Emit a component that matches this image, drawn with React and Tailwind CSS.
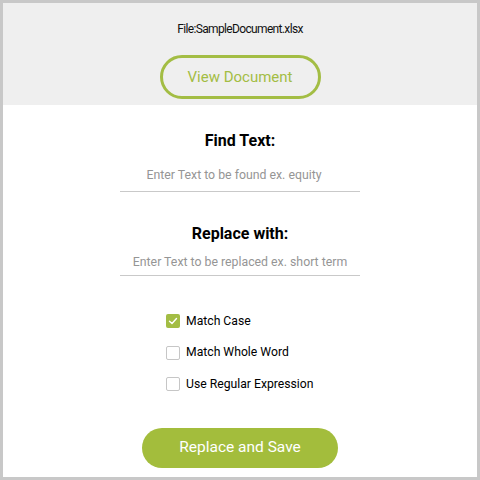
import React from "react";

function Check({ checked, label }) {
  return (
    <div className="flex items-center h-[20px]">
      {checked ? (
        <span className="w-[14px] h-[14px] rounded-[2px] bg-[#a3bd44] flex items-center justify-center">
          <svg width="10" height="10" viewBox="0 0 10 10" fill="none">
            <path d="M1.5 5.2 L4 7.5 L8.5 2.5" stroke="white" strokeWidth="1.4" strokeLinecap="round" strokeLinejoin="round" />
          </svg>
        </span>
      ) : (
        <span className="w-[14px] h-[14px] rounded-[2px] border border-[#c6c6c6] bg-white" />
      )}
      <span className="ml-[6px] text-[12.2px] text-black">{label}</span>
    </div>
  );
}

export default function App() {
  return (
    <div className="w-[480px] h-[480px] border-[3px] border-[#c8c8c8] bg-white flex flex-col" style={{ fontFamily: "Roboto, 'Liberation Sans', sans-serif" }}>
      <div className="h-[102px] bg-[#efefef] flex flex-col items-center shrink-0">
        <div className="mt-[17px] text-[12px] tracking-[-0.65px] text-[#111] leading-[18px]">File:SampleDocument.xlsx</div>
        <div className="mt-[17px] w-[161px] h-[44px] rounded-full border-[3px] border-[#a3bd44] flex items-center justify-center text-[15px] text-[#a3bd44]">
          View Document
        </div>
      </div>
      <div className="flex flex-col items-center">
        <div className="mt-[26px] text-[16px] font-bold text-black leading-[20px]">Find Text:</div>
        <div className="mt-[15px] w-[228px] h-[21px] pr-[12px] text-center text-[12.3px] text-[#959595] border-b border-[#c9c9c9] box-content pb-[4px]">
          Enter Text to be found ex. equity
        </div>
        <div className="mt-[32px] text-[16px] font-bold text-black leading-[20px]">Replace with:</div>
        <div className="mt-[9px] w-[240px] h-[21px] text-center text-[12.3px] text-[#959595] border-b border-[#c9c9c9] box-content pb-[1px]">
          Enter Text to be replaced ex. short term
        </div>
        <div className="mt-[35px] self-start ml-[163px] flex flex-col gap-[11.5px]">
          <Check checked label="Match Case" />
          <Check label="Match Whole Word" />
          <Check label="Use Regular Expression" />
        </div>
        <div className="mt-[34px] w-[196px] h-[40px] rounded-full bg-[#a3bd3c] flex items-center justify-center text-white text-[15.5px]">
          Replace and Save
        </div>
      </div>
    </div>
  );
}
